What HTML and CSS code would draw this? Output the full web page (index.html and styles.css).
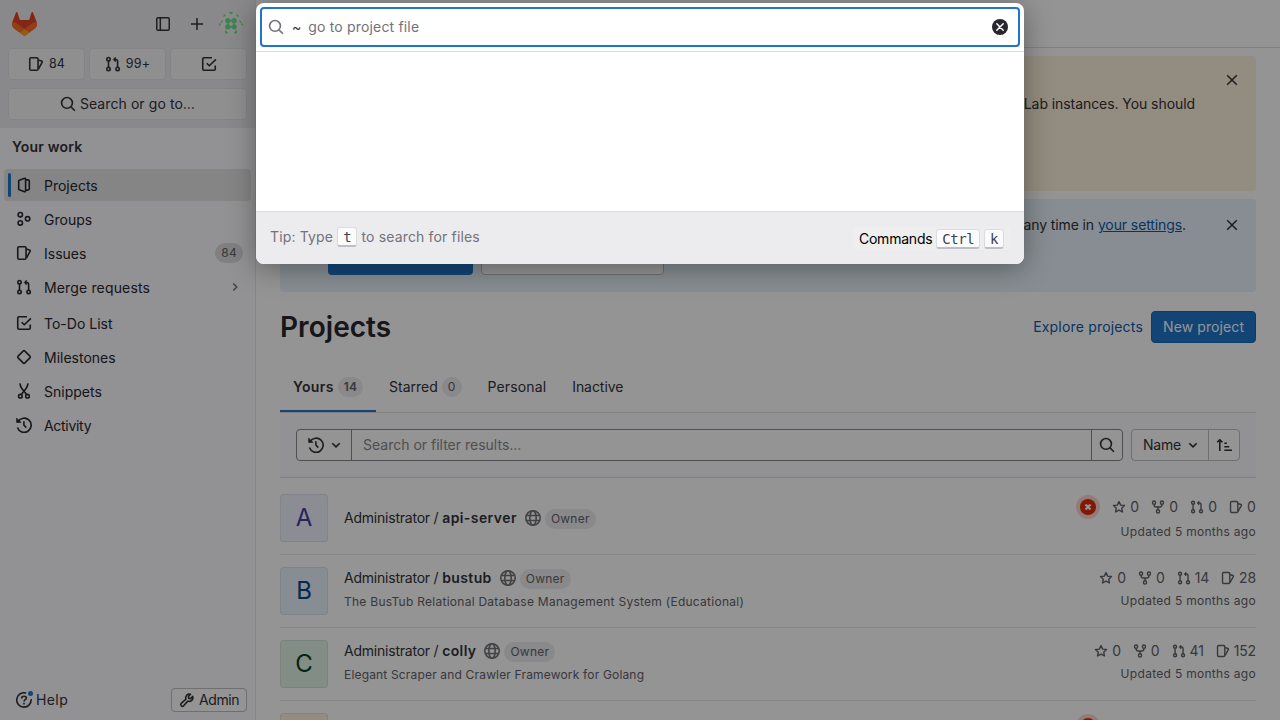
FILE: index.html
```html
<!DOCTYPE html>
<html lang="en">
<head>
<meta charset="utf-8">
<title>Projects</title>
<link rel="stylesheet" href="styles.css">
</head>
<body>
<svg class="defs" width="0" height="0">
  <symbol id="sidebar" viewBox="0 0 16 16"><rect x="1.75" y="1.75" width="12.5" height="12.5" rx="1.3"/><path d="M5.3 2v12"/></symbol>
  <symbol id="plus" viewBox="0 0 16 16"><path d="M8 2v12M2 8h12"/></symbol>
  <symbol id="issues" viewBox="0 0 16 16"><rect x="1.75" y="1.75" width="8.3" height="12.5" rx="1.3"/><path d="M10.2 4l3.300 1.100c.6.2.9.7.6 1.300L10.400 13"/></symbol>
  <symbol id="merge" viewBox="0 0 16 16"><circle cx="3.500" cy="3.200" r="1.700"/><circle cx="3.500" cy="12.900" r="1.700"/><circle cx="12.600" cy="12.900" r="1.700"/><path d="M3.500 5v6M12.600 11V5.200a1.700 1.700 0 0 0-1.700-1.700H9"/><path d="M10.300 1.300L8.300 3.500l2 2.200z" fill="currentColor" stroke-width=".8"/></symbol>
  <symbol id="todo" viewBox="0 0 16 16"><path d="M11 1.75H3c-.8 0-1.25.5-1.25 1.25v10c0 .8.5 1.25 1.25 1.25h10c.8 0 1.25-.5 1.25-1.25V9.500M5.700 7.200l2.600 2.600 6.600-6.400"/></symbol>
  <symbol id="search" viewBox="0 0 16 16"><circle cx="7" cy="6.900" r="5.400"/><path d="M11 10.900l3.900 3.900"/></symbol>
  <symbol id="project" viewBox="0 0 16 16"><path d="M8.600 1.300L3.300 3.200c-.4.2-.6.500-.6.900v7.800c0 .4.2.7.600.9l5.300 1.900c.6.2 1-.1 1-.7V2c0-.6-.4-.9-1-.7zM9.800 2.900h2c.800 0 1.500.600 1.500 1.300v7.600c0 .7-.7 1.300-1.500 1.300h-2"/></symbol>
  <symbol id="group" viewBox="0 0 16 16"><circle cx="4.300" cy="3.700" r="2.200"/><circle cx="4.300" cy="11.900" r="2.200"/><circle cx="11.600" cy="7.800" r="2.200"/></symbol>
  <symbol id="milestone" viewBox="0 0 16 16"><path d="M7.100 2.100L2.100 7.100c-.5.5-.5 1.300 0 1.800l5 5c.5.5 1.300.5 1.800 0l5-5c.5-.5.5-1.300 0-1.800l-5-5c-.5-.5-1.300-.5-1.800 0z"/></symbol>
  <symbol id="snippet" viewBox="0 0 16 16"><circle cx="4.400" cy="13.200" r="1.800"/><circle cx="11.500" cy="13.200" r="1.800"/><path d="M3.900.3c.2 2 1.100 4 2.300 5.800l4.400 5.500M12 .3c-.2 2-1.100 4-2.300 5.800l-4.400 5.500"/></symbol>
  <symbol id="history" viewBox="0 0 16 16"><path d="M2 4.600A7.100 7.100 0 1 1 1.400 10.600M7.900 4.300V8l2.400 2.600"/><path d="M.7 1.200v4.200h4.200z" fill="currentColor" stroke-width=".8"/></symbol>
  <symbol id="chev-r" viewBox="0 0 16 16"><path d="M6.300 4.500L9.800 8l-3.500 3.500"/></symbol>
  <symbol id="chev-d" viewBox="0 0 16 16"><path d="M4.300 6.200L8 9.900l3.700-3.700"/></symbol>
  <symbol id="close" viewBox="0 0 16 16"><path d="M3.200 3.200l9.600 9.600M12.800 3.200l-9.600 9.600"/></symbol>
  <symbol id="help" viewBox="0 0 16 16"><path d="M10.200 1.100A7.200 7.200 0 1 0 15.100 7.200M5.600 6.400C5.600 5 6.600 4.200 8 4.200s2.400.8 2.400 2C10.400 7.700 8 7.700 8 9.400M8 10.800v1.700"/></symbol>
  <symbol id="wrench" viewBox="0 0 16 16"><path d="M11.600 2.200a3.800 3.800 0 0 0-4.700 5L2.200 11.400a1.700 1.700 0 0 0 2.400 2.400l4.200-4.700a3.800 3.800 0 0 0 5-4.700L11.600 6.600l-1.900-.3-.3-1.900z"/></symbol>
  <symbol id="globe" viewBox="0 0 16 16"><circle cx="8" cy="8" r="7.200"/><ellipse cx="8" cy="8" rx="3.200" ry="7.200"/><path d="M1.500 5.500h13M1.500 10.500h13"/></symbol>
  <symbol id="star" viewBox="0 0 16 16"><path d="M8 1.800l1.900 4 4.400.5-3.200 3 .8 4.400L8 11.500l-3.900 2.200.8-4.400-3.200-3 4.400-.5z"/></symbol>
  <symbol id="fork" viewBox="0 0 16 16"><circle cx="3.500" cy="3" r="1.800"/><circle cx="12.500" cy="3" r="1.800"/><circle cx="8" cy="13" r="1.800"/><path d="M3.500 5c0 2 1.300 3 2.500 3h4c1.200 0 2.500-1 2.500-3M8 8v3"/></symbol>
  <symbol id="sort" viewBox="0 0 16 16"><path d="M3.800 14V3M1.200 5.300L3.800 2.700l2.600 2.600M8.300 6.300h2.600M8.300 9.700h5M8.300 13.200h7.700"/></symbol>
</svg>

<aside class="sidebar">
  <div class="top">
    <div class="brand">
      <svg class="logo" viewBox="0 0 25 24"><path fill="#e24329" d="M24.500 9.500L21 .5a.8.8 0 0 0-1.500.1L17.200 7.900H7.800L5.500.6A.8.8 0 0 0 4 .5L.5 9.500a6.200 6.200 0 0 0 2 7.200l10 7.300 10-7.300a6.200 6.200 0 0 0 2-7.200z"/><path fill="#fc6d26" d="M24.500 9.500a11 11 0 0 0-4.500 2L12.500 17l4.800 3.500 5.200-3.800a6.200 6.200 0 0 0 2-7.200zM.5 9.500a11 11 0 0 1 4.500 2L12.500 17l-4.800 3.500-5.200-3.800a6.200 6.200 0 0 1-2-7.200z"/><path fill="#fca326" d="M7.700 20.500l4.800 3.500 4.800-3.500-4.800-3.500z"/></svg>
      <svg class="i tool"><use href="#sidebar"/></svg>
      <svg class="i tool"><use href="#plus"/></svg>
      <svg class="face" viewBox="0 0 24 24"><circle cx="12" cy="12" r="12" fill="#f0f0f0"/><g fill="#6fe08e"><path d="M9.500 0h5L12 2.800zM6.500 1.500v3H3.500zM17.500 1.500v3h3zM3.500 7.500v3H1zM20.500 7.500v3H23zM0 11.500h2.500L0 14.500zM24 11.500h-2.500l2.500 3zM6 17.500l3.500 4H6zM18 17.500l-3.500 4H18z"/><circle cx="8.800" cy="8.700" r="2.600"/><circle cx="15.200" cy="8.700" r="2.600"/><circle cx="8.800" cy="14.800" r="2.600"/><circle cx="15.200" cy="14.800" r="2.600"/><path d="M8 8h8v1.500H8zM8 14h8v1.500H8zM8.500 8h1.200v7H8.500zM14.300 8h1.200v7h-1.200z"/></g></svg>
    </div>
    <div class="counts">
      <span class="box"><svg class="i"><use href="#issues"/></svg>84</span>
      <span class="box"><svg class="i"><use href="#merge"/></svg>99+</span>
      <span class="box"><svg class="i"><use href="#todo"/></svg></span>
    </div>
    <div class="box find"><svg class="i"><use href="#search"/></svg>Search or go to…</div>
  </div>
  <div class="heading">Your work</div>
  <nav>
    <a class="item active"><svg class="i"><use href="#project"/></svg><span>Projects</span></a>
    <a class="item"><svg class="i"><use href="#group"/></svg><span>Groups</span></a>
    <a class="item"><svg class="i"><use href="#issues"/></svg><span>Issues</span><b class="pill">84</b></a>
    <a class="item wide"><svg class="i"><use href="#merge"/></svg><span>Merge requests</span><svg class="i chev"><use href="#chev-r"/></svg></a>
    <a class="item gap"><svg class="i"><use href="#todo"/></svg><span>To-Do List</span></a>
    <a class="item"><svg class="i"><use href="#milestone"/></svg><span>Milestones</span></a>
    <a class="item"><svg class="i"><use href="#snippet"/></svg><span>Snippets</span></a>
    <a class="item tight"><svg class="i"><use href="#history"/></svg><span>Activity</span></a>
  </nav>
  <div class="foot">
    <span class="help"><svg class="i"><use href="#help"/></svg>Help<i class="dot"></i></span>
    <span class="admin"><svg class="i"><use href="#wrench"/></svg>Admin</span>
  </div>
</aside>

<main>
  <header class="bar"></header>
  <div class="content">
    <section class="alert warn"><p>Lab instances. You should</p><svg class="i x"><use href="#close"/></svg></section>
    <section class="alert info"><p>any time in <a>your settings</a>.</p><svg class="i x"><use href="#close"/></svg>
      <div class="actions"><span class="primary"></span><span class="secondary"></span></div>
    </section>
    <div class="title"><h1>Projects</h1><a>Explore projects</a><span class="new">New project</span></div>
    <div class="tabs">
      <span class="tab on">Yours <b class="pill">14</b></span><span class="tab">Starred <b class="pill">0</b></span><span class="tab personal">Personal</span><span class="tab inactive">Inactive</span>
    </div>
    <div class="filter">
      <div class="query">
        <span class="recent"><svg class="i"><use href="#history"/></svg><svg class="i"><use href="#chev-d"/></svg></span>
        <span class="field">Search or filter results…</span>
        <span class="go"><svg class="i"><use href="#search"/></svg></span>
      </div>
      <div class="sort"><span class="by">Name<svg class="i"><use href="#chev-d"/></svg></span><span class="dir"><svg class="i"><use href="#sort"/></svg></span></div>
    </div>
    <div class="row first">
      <div class="avatar a">A</div>
      <div class="name"><div class="line"><span class="owner">Administrator / </span><b>api-server</b><svg class="i"><use href="#globe"/></svg><span class="pill">Owner</span></div></div>
      <div class="meta"><div class="stats"><svg class="fail" viewBox="0 0 24 24"><circle cx="12" cy="12" r="12" fill="#fdd4cd"/><circle cx="12" cy="12" r="8" fill="#dd2b0e"/><path d="M9.500 9.500l5 5M14.500 9.500l-5 5" stroke="#fff" stroke-width="2.200"/></svg><span><svg class="i"><use href="#star"/></svg>0</span><span><svg class="i"><use href="#fork"/></svg>0</span><span><svg class="i"><use href="#merge"/></svg>0</span><span><svg class="i"><use href="#issues"/></svg>0</span></div><div class="upd">Updated 5 months ago</div></div>
    </div>
    <div class="row">
      <div class="avatar b">B</div>
      <div class="name"><div class="line"><span class="owner">Administrator / </span><b>bustub</b><svg class="i"><use href="#globe"/></svg><span class="pill">Owner</span></div><div class="desc">The BusTub Relational Database Management System (Educational)</div></div>
      <div class="meta"><div class="stats"><span><svg class="i"><use href="#star"/></svg>0</span><span><svg class="i"><use href="#fork"/></svg>0</span><span><svg class="i"><use href="#merge"/></svg>14</span><span><svg class="i"><use href="#issues"/></svg>28</span></div><div class="upd">Updated 5 months ago</div></div>
    </div>
    <div class="row">
      <div class="avatar c">C</div>
      <div class="name"><div class="line"><span class="owner">Administrator / </span><b>colly</b><svg class="i"><use href="#globe"/></svg><span class="pill">Owner</span></div><div class="desc short">Elegant Scraper and Crawler Framework for Golang</div></div>
      <div class="meta"><div class="stats"><span><svg class="i"><use href="#star"/></svg>0</span><span><svg class="i"><use href="#fork"/></svg>0</span><span><svg class="i"><use href="#merge"/></svg>41</span><span><svg class="i"><use href="#issues"/></svg>152</span></div><div class="upd">Updated 5 months ago</div></div>
    </div>
    <div class="row last">
      <div class="avatar d"></div>
      <div class="meta"><svg class="fail next" viewBox="0 0 24 24"><circle cx="12" cy="12" r="12" fill="#fdd4cd"/><circle cx="12" cy="12" r="8" fill="#dd2b0e"/></svg></div>
    </div>
  </div>
</main>

<div class="backdrop">
  <div class="modal">
    <div class="input"><svg class="i"><use href="#search"/></svg><span class="tilde">~</span><span class="ph">go to project file</span>
      <svg class="clear" viewBox="0 0 16 16"><circle cx="8" cy="8" r="8" fill="#28272d"/><path d="M4.800 4.800l6.400 6.400M11.200 4.800l-6.400 6.400" stroke="#fff" stroke-width="1.500" stroke-linecap="round"/></svg></div>
    <div class="results"></div>
    <div class="tips"><span class="tip">Tip: Type <kbd>t</kbd> to search for files</span><span class="cmd">Commands <kbd>Ctrl</kbd> <kbd>k</kbd></span></div>
  </div>
</div>
</body>
</html>
```
FILE: styles.css
```css
* { box-sizing: border-box; }
body { margin: 0; width: 1280px; height: 720px; overflow: hidden; display: flex; background: #fff; color: #333238; font: 14px/20px Inter, "Noto Sans", sans-serif; white-space: nowrap; }
.defs { position: absolute; }
.i { width: 16px; height: 16px; flex: none; fill: none; stroke: currentColor; stroke-width: 1.6; stroke-linejoin: round; overflow: visible; }
a { color: #0b5cad; }
.pill { display: inline-flex; align-items: center; justify-content: center; height: 20px; padding: 0 6px; border-radius: 10px; background: #dcdcde; color: #626168; font-size: 12px; font-weight: 400; letter-spacing: .25px; }

.sidebar { width: 256px; height: 720px; flex: none; display: flex; flex-direction: column; background: #fbfafd; border-right: 1px solid #e7e6ea; }
.top { height: 128px; padding: 0 8px; background: #ececef; }
.brand { height: 48px; display: flex; align-items: center; padding: 0 4px; }
.logo { width: 25px; height: 24px; margin-right: auto; }
.tool { margin-right: 18px; stroke-width: 1.5; }
.tool + .face { margin: 0 0 0 -4px; }
.face { width: 24px; height: 24px; }
.counts { display: flex; gap: 4px; }
.box { flex: 1; height: 32px; display: flex; align-items: center; justify-content: center; gap: 5px; border: 1px solid #e3e3e7; border-radius: 4px; background: #f6f6f9; font-size: 12.5px; letter-spacing: .2px; }
.find { margin-top: 8px; font-size: 14px; letter-spacing: .08px; gap: 4px; }
.heading { padding: 9px 12px 12px; font-weight: 600; letter-spacing: .2px; }
nav { padding: 0 4px; }
.item { position: relative; height: 32px; margin-bottom: 2px; padding: 0 8px 0 12px; border-radius: 4px; display: flex; align-items: center; gap: 12px; color: #28272d; }
.item span { flex: 1; padding-top: 1px; }
.wide { letter-spacing: .15px; }
.tight { letter-spacing: -.3px; }
.active { background: #e6e6e6; }
.active::before { content: ""; position: absolute; left: 4px; top: 4px; width: 3px; height: 24px; border-radius: 2px; background: #1f75cb; }
.gap { margin-top: 4px; }
.chev { color: #737278; }
.foot { margin-top: auto; height: 40px; padding: 0 8px 0 16px; display: flex; justify-content: space-between; align-items: center; }
.help { position: relative; display: flex; align-items: center; gap: 4px; letter-spacing: .4px; }
.dot { position: absolute; left: 12px; top: 1px; width: 5px; height: 5px; border-radius: 50%; background: #1f75cb; }
.admin { width: 76px; height: 24px; padding: 0 7px; border: 1px solid #bfbfc3; border-radius: 4px; background: #fff; display: flex; align-items: center; gap: 4px; letter-spacing: -.4px; }

main { flex: 1; min-width: 0; height: 720px; overflow: hidden; }
.bar { height: 48px; border-bottom: 1px solid #dcdcde; }
.content { padding: 8px 24px 0; }
.alert { position: relative; border-radius: 4px; }
.alert p { margin: 0; text-align: right; letter-spacing: -.07px; }
.warn { height: 135px; padding: 38px 61px 0 0; background: #fdf1dd; }
.info { height: 93px; margin-top: 8px; padding: 16px 70px 0 48px; background: #e9f3fc; }
.info p { letter-spacing: -.1px; }
.info a { text-decoration: underline; }
.x { position: absolute; right: 16px; top: 16px; stroke-width: 1.5; }
.info .x { top: 18px; }
.actions { display: flex; gap: 8px; margin-top: 8px; }
.primary { width: 145px; height: 32px; border-radius: 4px; background: #1f75cb; }
.secondary { width: 183px; height: 32px; border-radius: 4px; background: #fff; border: 1px solid #bfbfc3; }
.title { height: 70px; display: flex; align-items: center; letter-spacing: .18px; }
h1 { margin: 0 auto 0 0; font-size: 28px; line-height: 36px; font-weight: 600; letter-spacing: .05px; color: #28272d; }
.new { width: 105px; height: 32px; margin-left: 8px; padding: 5px 11px 0; border: 1px solid #1068bf; border-radius: 4px; background: #1f75cb; color: #fff; letter-spacing: .1px; }
.tabs { height: 51px; display: flex; border-bottom: 1px solid #dcdcde; color: #333238; }
.tab { height: 50px; padding: 0 13px; display: flex; align-items: center; gap: 4px; }
.tab .pill { background: #ececef; }
.on { width: 96px; font-weight: 600; border-bottom: 2px solid #1f75cb; padding-top: 2px; letter-spacing: .35px; }
.on .pill { font-weight: 600; }
.personal { letter-spacing: .12px; }
.inactive { letter-spacing: -.05px; }
.filter { height: 65px; padding: 16px; display: flex; gap: 8px; background: #fbfafd; border-bottom: 1px solid #dcdcde; }
.query { flex: 1; height: 32px; display: flex; border: 1px solid #89888d; border-radius: 4px; background: #fff; }
.recent { width: 55px; padding-left: 11px; display: flex; align-items: center; gap: 4px; border-right: 1px solid #89888d; }
.field { flex: 1; padding: 5px 11px; color: #89888d; }
.go { width: 31px; display: grid; place-items: center; border-left: 1px solid #89888d; }
.sort { width: 109px; height: 32px; display: flex; border: 1px solid #bfbfc3; border-radius: 4px; background: #fff; }
.by { flex: 1; padding-left: 11px; display: flex; align-items: center; gap: 4px; letter-spacing: -.2px; }
.dir { width: 31px; display: grid; place-items: center; border-left: 1px solid #bfbfc3; }

.row { height: 73px; padding-top: 12px; display: flex; border-bottom: 1px solid #ececef; }
.first { height: 77px; padding-top: 16px; }
.avatar { width: 48px; height: 48px; flex: none; display: grid; place-items: center; border: 1px solid rgba(31,30,36,.08); border-radius: 4px; font-size: 24px; }
.a { background: #f1f1ff; color: #41419f; }
.b { background: #e9f3fc; color: #064787; }
.c { background: #dff3e6; color: #0a4020; }
.d { background: #fdf1dd; }
.name { margin-left: 16px; }
.line { height: 24px; margin-top: -1px; display: flex; align-items: center; white-space: pre; }
.first .line { height: 48px; margin-top: 0; }
.owner { letter-spacing: -.22px; }
.line b { font-weight: 600; letter-spacing: .38px; }
.first .line b { letter-spacing: .42px; }
.line .i { margin: 0 4px 0 8px; color: #737278; }
.line .pill { background: #ececef; font-size: 12px; margin-top: 2px; }
.desc { margin-top: 2px; font-size: 12px; line-height: 20px; color: #626168; letter-spacing: .265px; }
.short { letter-spacing: .17px; }
.meta { margin: -1px 0 0 auto; color: #626168; }
.first .meta { margin-top: 1px; }
.last .meta { margin-top: 1px; }
.stats { height: 24px; display: flex; justify-content: flex-end; align-items: center; gap: 12px; }
.stats span { display: flex; align-items: center; gap: 4px; letter-spacing: -.15px; }
.first .stats span { letter-spacing: .1px; }
.stats .i { width: 14px; height: 14px; }
.fail { width: 24px; height: 24px; }
.next { display: block; margin-right: 156px; }
.upd { text-align: right; font-size: 12px; letter-spacing: .3px; }
.first .upd { margin-top: 3px; }
.row:not(.first) .upd { margin-top: 1px; }

.backdrop { position: absolute; inset: 0; background: rgba(0,0,0,.42); }
.modal { width: 768px; height: 261px; margin: 3px auto 0; border-radius: 8px; overflow: hidden; background: #fff; display: flex; flex-direction: column; box-shadow: 0 4px 28px rgba(0,0,0,.36); }
.input { height: 40px; flex: none; margin: 4px; padding: 0 10px 0 6px; border: 2px solid #1f75cb; border-radius: 4px; display: flex; align-items: center; color: #737278; }
.tilde { margin-left: 8px; color: #333238; }
.ph { margin-left: 7px; letter-spacing: .17px; }
.clear { width: 16px; height: 16px; margin-left: auto; fill: none; }
.results { flex: 1; border-top: 1px solid #dcdcde; border-bottom: 1px solid #dcdcde; }
.tips { height: 52px; flex: none; padding: 15px 14px 0; display: flex; justify-content: space-between; align-items: flex-start; background: #ececef; color: #737278; }
.tip { letter-spacing: .16px; }
.cmd { height: 23px; padding: 2px 6px 0; border-radius: 4px; background: #eee; color: #000; letter-spacing: -.22px; }
kbd { display: inline-block; height: 20px; padding: 0 5px; border: 1px solid #dcdcde; border-bottom: 2px solid #bfbfc3; border-radius: 3px; background: #fbfafd; color: #434248; font: 14px/18px "DejaVu Sans Mono", monospace; letter-spacing: -.4px; vertical-align: top; }
```
